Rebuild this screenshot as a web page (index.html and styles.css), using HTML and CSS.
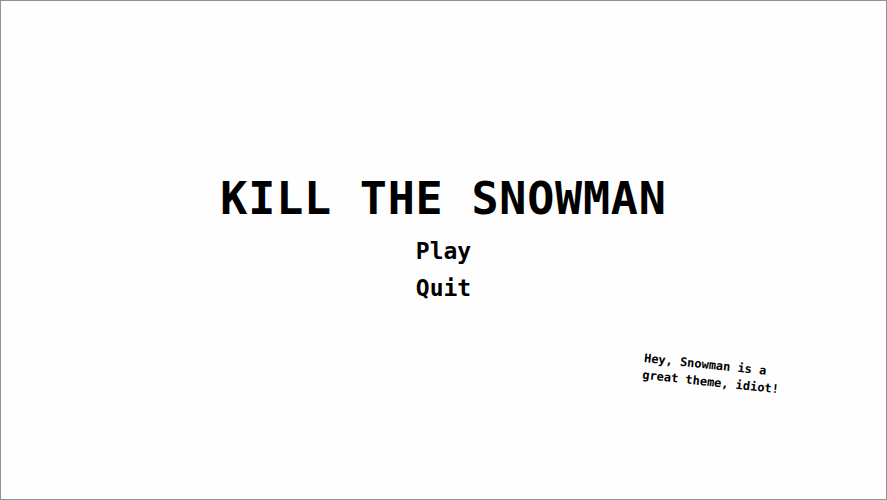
FILE: index.html
```html
<!DOCTYPE html>
<html lang="en">
<head>
  <meta charset="UTF-8">
  <meta name="viewport" content="width=device-width, initial-scale=1.0">
  <title>Kill the Snowman</title>
  <link rel="stylesheet" href="styles.css">
</head>
<body>

<div class="screen">
  <!-- Main menu -->
  <div class="menu">
    <h1 class="title">KILL THE SNOWMAN</h1>
    <button class="menu-btn">Play</button>
    <button class="menu-btn">Quit</button>
  </div>

  <!-- Tilted splash text -->
  <p class="splash">Hey, Snowman is a<br>great theme, idiot!</p>
</div>

</body>
</html>
```

FILE: styles.css
```css
/* Title screen */
html, body {
  margin: 0;
  padding: 0;
  background-color: #fff;
}
.screen {
  position: relative;
  box-sizing: border-box;
  width: 887px;
  height: 500px;
  border: 1px solid #8c939b;
  background-color: #fefefe;
  font-family: "DejaVu Sans Mono", monospace;
  font-weight: bold;
  color: #000;
  overflow: hidden;
}
.menu {
  display: flex;
  flex-direction: column;
  align-items: center;
  padding-top: 172px;
}
.title {
  margin: 0 0 8px 0;
  font-size: 45px;
  line-height: 52px;
  letter-spacing: 0.8px;
  font-weight: bold;
}
.menu-btn {
  background: none;
  border: none;
  padding: 0;
  font-family: inherit;
  font-weight: bold;
  font-size: 23px;
  line-height: 37px;
  color: #000;
  cursor: pointer;
}
.splash {
  position: absolute;
  left: 644px;
  top: 349px;
  margin: 0;
  font-size: 12px;
  line-height: 17px;
  transform: rotate(6deg);
  transform-origin: top left;
}
```
